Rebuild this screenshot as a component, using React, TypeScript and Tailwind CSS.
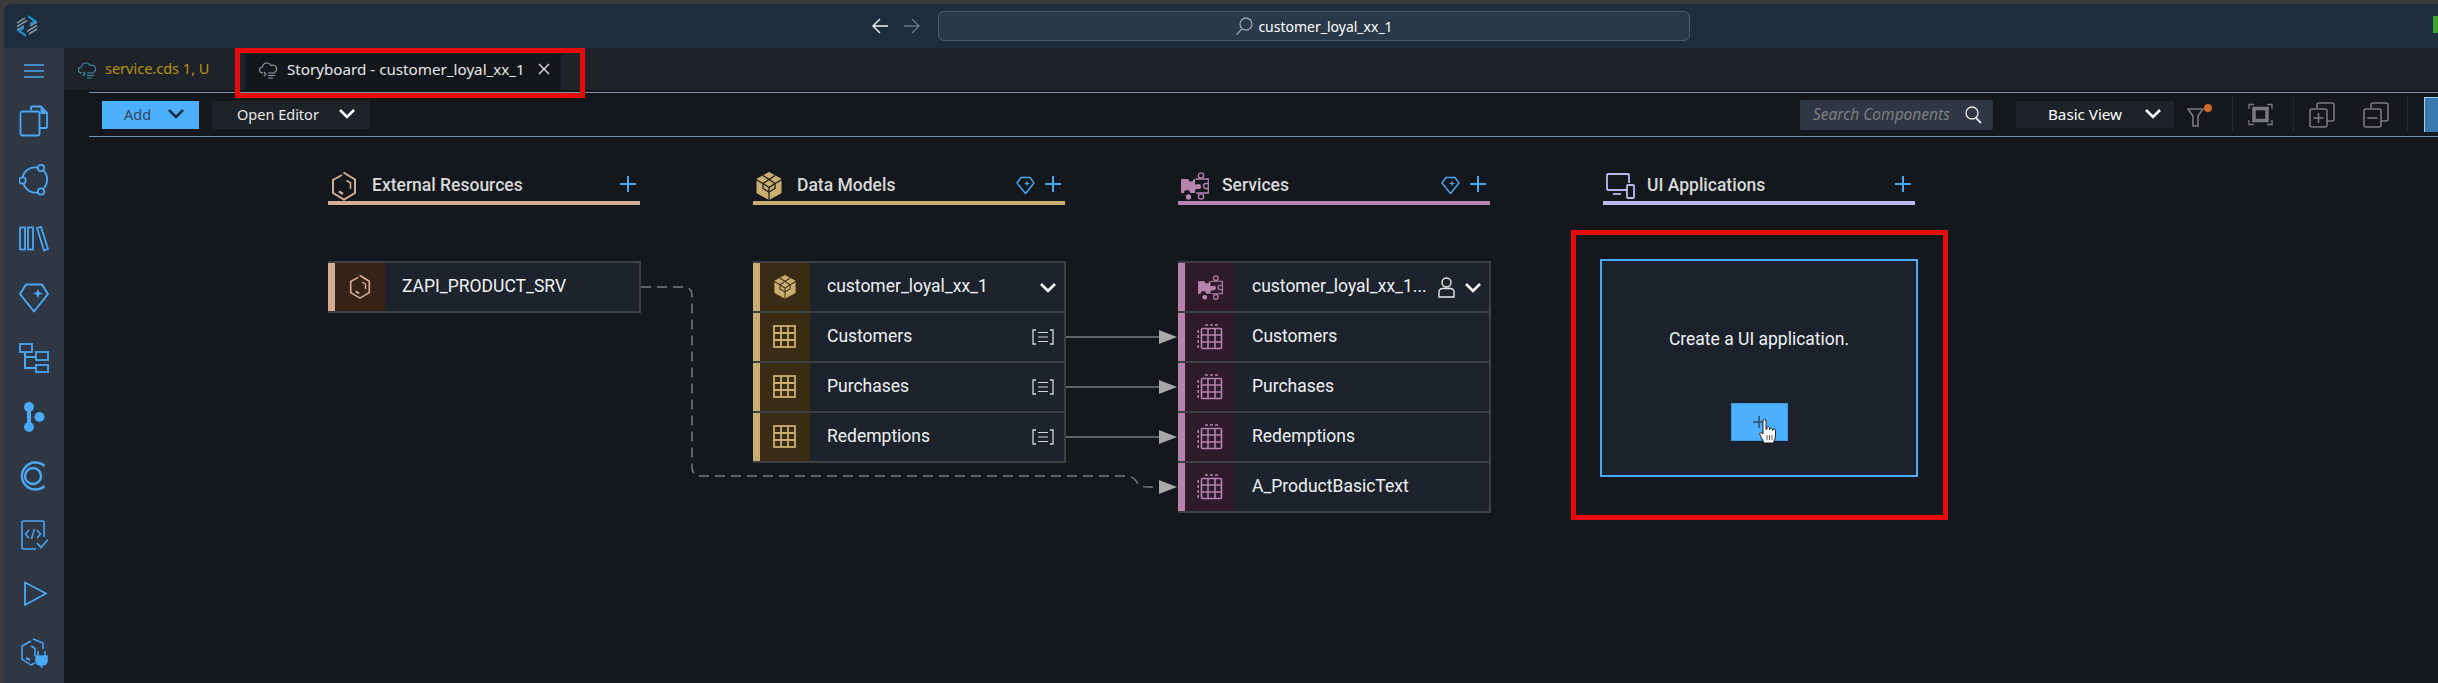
import React from "react";

const BLUE = "#4aa8f5";
const UI = "font-['Segoe_UI','Noto_Sans','Open_Sans',sans-serif]";

function Chevron({ color = "#ffffff", w = 18, h = 11 }: { color?: string; w?: number; h?: number }) {
  return (
    <svg width={w} height={h} viewBox="0 0 18 11" fill="none">
      <path d="M2 2 L9 9 L16 2" stroke={color} strokeWidth="2.6" />
    </svg>
  );
}

function Plus({ color = BLUE }: { color?: string }) {
  return (
    <svg width="16" height="16" viewBox="0 0 16 16">
      <path d="M8 0V16M0 8H16" stroke={color} strokeWidth="2" />
    </svg>
  );
}

function Gem({ size = 19 }: { size?: number }) {
  return (
    <svg width={size} height={size} viewBox="0 0 19 19" fill="none">
      <path d="M5 1.500H14L18 7L9.500 17.500L1 7Z" stroke={BLUE} strokeWidth="1.400" strokeLinejoin="round" />
      <path d="M11 4.500L11.800 6.700L14 7.500L11.800 8.300L11 10.500L10.200 8.300L8 7.500L10.200 6.700Z" fill={BLUE} />
    </svg>
  );
}

function Hex({ size = 26, color = "#d1ad98" }: { size?: number; color?: string }) {
  return (
    <svg width={size} height={(size * 30) / 26} viewBox="0 0 26 30" fill="none" stroke={color} strokeWidth="2">
      <path d="M11 4L2 9V22L13 28.500L24 22V8.500L12.500 1.500" />
      <path d="M15.500 9.500L19.500 12V18" strokeWidth="1.600" />
      <path d="M8 20.500L12 23" strokeWidth="2.200" />
    </svg>
  );
}

function Cube({ size = 26, color = "#c9ae6f", line = "#14181c" }: { size?: number; color?: string; line?: string }) {
  return (
    <svg width={size} height={(size * 28) / 26} viewBox="0 0 26 28">
      <path d="M13 0.500L25 7V21L13 27.500L1 21V7Z" fill={color} stroke={color} strokeLinejoin="round" />
      <g fill="none" stroke={line} strokeWidth="1.200">
        <path d="M7 3.500L13 7.500L19 3.500" />
        <path d="M0 7.500L7 11.500V16.500L13 20L19 16.500V11.500L26 7.500" />
        <path d="M7 11.500L13 7.500L19 11.500L13 15.500ZM13 15.500V20M13 20V28" />
      </g>
    </svg>
  );
}

function Puzzle({ size = 28, color = "#b583ac" }: { size?: number; color?: string }) {
  return (
    <svg width={size} height={size} viewBox="0 0 28 28" fill="none">
      <path d="M0 7H7.500A2.500 2.500 0 0 0 12.500 7H14V12.200A2.600 2.600 0 1 1 14 17.800V21H9A3 3 0 0 0 3 21H0Z" fill={color} />
      <circle cx="7.500" cy="25" r="2.700" fill={color} />
      <circle cx="20" cy="3.500" r="2.600" stroke={color} strokeWidth="1.300" />
      <circle cx="20" cy="24.500" r="2.600" stroke={color} strokeWidth="1.300" />
      <path d="M14.500 7H27.300V21H15M27 11.500H25A2.500 2.500 0 0 0 25 16.500H27" stroke={color} strokeWidth="1.300" />
      <circle cx="17.500" cy="14.500" r="2.600" fill={color} />
    </svg>
  );
}

function Device() {
  const c = "#bdb8f0";
  return (
    <svg width="29" height="26" viewBox="0 0 29 26" fill="none">
      <path d="M21 17H2A1.200 1.200 0 0 1 1 16V2A1.200 1.200 0 0 1 2 1H22A1.200 1.200 0 0 1 23 2V10" stroke={c} strokeWidth="1.800" />
      <path d="M7 21H15" stroke={c} strokeWidth="1.800" />
      <rect x="21" y="12" width="7" height="13" rx="1" stroke={c} strokeWidth="1.800" />
    </svg>
  );
}

function Table({ color, dashed }: { color: string; dashed?: boolean }) {
  return (
    <svg width="26" height="26" viewBox="0 0 26 26" fill="none">
      {dashed ? (
        <>
          <path d="M8 1H11M13 1H16M18 1H21" stroke={color} strokeWidth="1.500" />
          <path d="M1.200 6V9M1.200 11V14M1.200 16V19M1.200 21V24" stroke={color} strokeWidth="1.500" />
          <rect x="4.500" y="4.500" width="20" height="20" stroke={color} strokeWidth="1.600" rx="1" />
          <path d="M11 4.500V24.500M18 4.500V24.500M4.500 11H24.500M4.500 18H24.500" stroke={color} strokeWidth="1.600" />
        </>
      ) : (
        <>
          <rect x="2" y="2" width="21" height="21" stroke={color} strokeWidth="1.800" />
          <path d="M9 2V23M16 2V23M2 9H23M2 16H23" stroke={color} strokeWidth="1.800" />
        </>
      )}
    </svg>
  );
}

function ListIcon() {
  return (
    <svg width="22" height="16" viewBox="0 0 22 16" fill="none" stroke="#d6d6d6">
      <path d="M4 1H1V15H4M18 1H21V15H18" strokeWidth="1.300" />
      <path d="M6 3.500H16M6 8H16M6 12.500H16" strokeWidth="1.200" />
    </svg>
  );
}

function Person() {
  return (
    <svg width="17" height="21" viewBox="0 0 17 21" fill="none" stroke="#e8e8e8" strokeWidth="1.400">
      <circle cx="8.500" cy="5.500" r="4.500" />
      <path d="M1 20V15A3.500 3.500 0 0 1 4.500 11.500H12.500A3.500 3.500 0 0 1 16 15V20Z" />
    </svg>
  );
}

function CloudFile({ color = "#8fa0a8" }: { color?: string }) {
  return (
    <svg width="19" height="19" viewBox="0 0 19 19" fill="none" stroke={color} strokeWidth="1.100">
      <path d="M4 13H3.500A3 3 0 0 1 3.500 7A4.500 4.500 0 0 1 12 5.500A3.700 3.700 0 0 1 15.500 12.500" />
      <path d="M5 12L7 14L5 16M9 13H16M9 15.500H16M9 18H14" />
    </svg>
  );
}

const sideIcons: React.ReactNode[] = [
  <svg key="files" width="30" height="32" viewBox="0 0 30 32" fill="none" stroke={BLUE} strokeWidth="1.800">
    <path d="M12 5V2.500A1 1 0 0 1 13 1.500H22L28 7.500V22A1 1 0 0 1 27 23H21" />
    <rect x="1.500" y="6.500" width="19" height="24" rx="2" />
    <path d="M21.500 1.500L28 8V9H21.500Z" fill={BLUE} stroke="none" />
  </svg>,
  <svg key="nodes" width="30" height="32" viewBox="0 0 30 32" fill="none" stroke={BLUE} strokeWidth="1.800">
    <path d="M25 7A13 13 0 0 1 25 24" />
    <path d="M19 28.500A13 13 0 0 1 4.500 20" />
    <path d="M3.500 13A13 13 0 0 1 18 3.500" />
    <circle cx="22" cy="4" r="3.200" />
    <circle cx="3.500" cy="16.500" r="3.200" />
    <circle cx="22" cy="27.500" r="3.200" />
  </svg>,
  <svg key="books" width="30" height="26" viewBox="0 0 30 26" fill="none" stroke={BLUE} strokeWidth="1.800">
    <rect x="1" y="1.500" width="5" height="22" />
    <rect x="9" y="1.500" width="5" height="22" />
    <path d="M18 2L22 1L29 23L25 24.500Z" />
  </svg>,
  <svg key="gem" width="30" height="30" viewBox="0 0 30 30" fill="none">
    <path d="M7 1.500H23L29 11L15 28.500L1 11Z" stroke={BLUE} strokeWidth="2" strokeLinejoin="round" />
    <path d="M19 5.500L20.300 9.200L24 10.500L20.300 11.800L19 15.500L17.700 11.800L14 10.500L17.700 9.200Z" fill={BLUE} />
  </svg>,
  <svg key="tree" width="30" height="30" viewBox="0 0 30 30" fill="none" stroke={BLUE} strokeWidth="1.800">
    <rect x="1" y="1" width="12" height="8" />
    <rect x="17" y="9" width="12" height="8" />
    <rect x="17" y="22" width="12" height="7" />
    <path d="M6 9V25H17M6 14H17" strokeWidth="2" />
  </svg>,
  <svg key="dots" width="30" height="30" viewBox="0 0 30 30" fill={BLUE}>
    <circle cx="10" cy="5" r="5" />
    <circle cx="10" cy="25" r="5" />
    <circle cx="20.500" cy="15" r="5" />
    <path d="M8 8H12V22H8Z" />
  </svg>,
  <svg key="rings" width="30" height="30" viewBox="0 0 30 30" fill="none" stroke={BLUE} strokeWidth="2.400">
    <circle cx="14" cy="15" r="8" />
    <path d="M25.500 5A13.500 13.500 0 1 0 25.500 25" />
  </svg>,
  <svg key="code" width="30" height="30" viewBox="0 0 30 30" fill="none" stroke={BLUE} strokeWidth="1.600">
    <path d="M25 17V2.500A1.500 1.500 0 0 0 23.500 1H4.500A1.500 1.500 0 0 0 3 2.500V27.500A1.500 1.500 0 0 0 4.500 29H17" />
    <path d="M18 23L22 27.500L29 19.500" />
    <path d="M10 10L6.500 14L10 18M18 10L21.500 14L18 18M15.500 9L12.500 19" strokeWidth="1.500" />
  </svg>,
  <svg key="play" width="30" height="30" viewBox="0 0 30 30" fill="none" stroke={BLUE} strokeWidth="1.800">
    <path d="M6 3.500L27 14.500L6 26Z" strokeLinejoin="round" />
  </svg>,
  <svg key="plug" width="30" height="30" viewBox="0 0 30 30" fill="none" stroke={BLUE} strokeWidth="1.500">
    <path d="M12 3L3 8V21L12 27L16 25M14 1L24 5V11" />
    <path d="M12 8L16 10.500V18" />
    <path d="M7 20L11 22" strokeWidth="2" />
    <path d="M19 13V18M26 13V18M17 18H28V23A4 4 0 0 1 24 27H21A4 4 0 0 1 17 23ZM22.500 27V30" fill={BLUE} strokeWidth="1.500" />
  </svg>,
];

function Sidebar() {
  return (
    <aside className="flex w-[60px] shrink-0 flex-col items-center bg-[#2f3744]">
      <div className="flex h-[44px] w-full items-center justify-center pt-[2px]">
        <svg width="20" height="14" viewBox="0 0 20 14">
          <path d="M0 1H20M0 7H20M0 13H20" stroke={BLUE} strokeWidth="1.400" />
        </svg>
      </div>
      {sideIcons.map((icon, i) => (
        <div key={i} className="flex h-[60px] w-full items-center justify-center">
          {icon}
        </div>
      ))}
    </aside>
  );
}

function TitleBar() {
  return (
    <header className="flex h-[44px] shrink-0 items-center rounded-tl-lg bg-[#1e2d3d]">
      <svg className="ml-[12px]" width="22" height="24" viewBox="0 0 22 24" fill="none">
        <path d="M1 9L9 4M1 12.500L11 6.500M1 16L8 12M21 8L14 12M21 11.500L11 17.500M21 15L13 20" stroke="#7f909e" strokeWidth="1.500" />
        <path d="M12 1L21 7L14 11.500V9L17 7L12 3.500Z" fill="#1b8fd0" />
        <path d="M10 23L1 17L8 12.500V15L5 17L10 20.500Z" fill="#1b8fd0" />
      </svg>
      <svg className="ml-[834px]" width="16" height="16" viewBox="0 0 16 16" fill="none" stroke="#f2f2f2" strokeWidth="1.400">
        <path d="M16 8H1M8 1L1 8L8 15" />
      </svg>
      <svg className="ml-[16px]" width="16" height="16" viewBox="0 0 16 16" fill="none" stroke="#6d7680" strokeWidth="1.400">
        <path d="M0 8H15M8 1L15 8L8 15" />
      </svg>
      <div className={`ml-[18px] flex h-[30px] w-[752px] items-center justify-center gap-[5px] rounded-md border border-[#4d5b6b] bg-[#2a3949] text-[14px] text-white ${UI}`}>
        <svg width="18" height="18" viewBox="0 0 18 18" fill="none" stroke="#9aa3ab" strokeWidth="1.300">
          <circle cx="11" cy="7" r="6" />
          <path d="M7 12L1.500 17.500" />
        </svg>
        customer_loyal_xx_1
      </div>
      <div className="ml-auto mb-[4px] mr-0 h-[17px] w-[5px] bg-[#3fa32f]" />
    </header>
  );
}

function Tabs() {
  return (
    <div className={`flex h-[42px] shrink-0 bg-[#1e2229] text-[14.500px] ${UI}`}>
      <div className="flex w-[181px] items-center gap-[8px] pl-[14px] text-[#b8960c]">
        <CloudFile color="#3e8fb0" />
        <span>service.cds 1, U</span>
      </div>
      <div className="flex w-[316px] items-center gap-[9px] bg-[#13171b] pl-[14px] text-[15.200px] text-[#e8e8e8]">
        <CloudFile />
        <span>Storyboard - customer_loyal_xx_1</span>
        <svg className="ml-[4px]" width="12" height="12" viewBox="0 0 12 12" stroke="#e8e8e8" strokeWidth="1.300">
          <path d="M1 1L11 11M11 1L1 11" />
        </svg>
      </div>
    </div>
  );
}

function Toolbar() {
  const ic = "#7a7a7a";
  return (
    <div className={`ml-[25px] mt-[2px] flex h-[45px] shrink-0 items-center border-y border-[#7d93ad] pr-0 text-[14.500px] ${UI}`}>
      <button className="ml-[13px] flex h-[28px] w-[97px] items-center bg-[#4db0ff] pl-[22px] text-[#33475b]">
        Add
        <span className="-mt-[3px] ml-[16px] flex"><Chevron color="#1b2a3a" /></span>
      </button>
      <button className="ml-[13px] flex h-[28px] w-[158px] items-center bg-[#1e2229] pl-[25px] text-[#e8e8e8]">
        Open Editor
        <span className="-mt-[3px] ml-[19px] flex"><Chevron /></span>
      </button>
      <div className="ml-[1430px] flex h-[30px] w-[193px] items-center justify-between rounded-[2px] bg-[#2f3744] pl-[13px] pr-[11px] text-[15.500px] italic text-[#7e7e7e]">
        Search Components
        <svg width="17" height="18" viewBox="0 0 17 18" fill="none" stroke="#e0e0e0" strokeWidth="1.400">
          <circle cx="7" cy="7" r="6" />
          <path d="M11 12L16 17" strokeWidth="1.800" />
        </svg>
      </div>
      <div className="ml-[23px] flex h-[27px] w-[158px] items-center bg-[#1e2229] pl-[32px] text-[15.200px] text-white">
        Basic View
        <span className="-mt-[2px] ml-[22px] flex"><Chevron /></span>
      </div>
      <svg className="ml-[13px]" width="26" height="24" viewBox="0 0 26 24" fill="none">
        <path d="M1 6H16L11 13V23H6V13Z" stroke={ic} strokeWidth="1.600" />
        <circle cx="21" cy="5" r="4" fill="#d0692b" />
      </svg>
      <div className="ml-[19px] h-[36px] w-px bg-[#252a30]" />
      <svg className="ml-[15px]" width="25" height="23" viewBox="0 0 25 23" fill="none" stroke={ic}>
        <path d="M1 6V1.500H6M19 1.500H24V6M24 17V21.500H19M6 21.500H1V17" strokeWidth="1.300" />
        <rect x="6" y="5.500" width="13" height="12" strokeWidth="3.500" />
      </svg>
      <div className="ml-[20px] h-[36px] w-px bg-[#252a30]" />
      <svg className="ml-[15px]" width="26" height="26" viewBox="0 0 26 26" fill="none" stroke={ic} strokeWidth="1.600">
        <path d="M8 6V3A2 2 0 0 1 10 1H23A2 2 0 0 1 25 3V17A2 2 0 0 1 23 19H18" />
        <rect x="1" y="7" width="17" height="18" rx="2" />
        <path d="M9.500 11V21M4.500 16H14.500" />
      </svg>
      <svg className="ml-[28px]" width="26" height="26" viewBox="0 0 26 26" fill="none" stroke={ic} strokeWidth="1.600">
        <path d="M8 6V3A2 2 0 0 1 10 1H23A2 2 0 0 1 25 3V17A2 2 0 0 1 23 19H18" />
        <rect x="1" y="7" width="17" height="18" rx="2" />
        <path d="M4.500 16H14.500" />
      </svg>
      <div className="ml-[18px] h-[36px] w-px bg-[#252a30]" />
      <div className="ml-[16px] h-[35px] flex-1 border-l border-t border-[#9fd0f5] bg-[#3a78b0]" />
    </div>
  );
}

type Row = { icon: React.ReactNode; label: string; right?: React.ReactNode; tight?: boolean };

function NodeCard({ bar, cell, rows }: { bar: string; cell: string; rows: Row[] }) {
  return (
    <div className="mt-[56px] w-[313px] border-y-2 border-r-2 border-[#3c4044] bg-[#1c232c]">
      {rows.map((r, i) => (
        <div key={r.label} className={`flex items-stretch border-[#3c4044] ${i < rows.length - 1 ? "h-[50px] border-b-2" : "h-[48px]"}`}>
          <div className={`w-[7px] shrink-0 ${bar}`} />
          <div className={`flex w-[50px] shrink-0 items-center justify-center ${cell}`}>{r.icon}</div>
          <div className="min-w-0 flex-1 self-center pb-[3px] pl-[17px] text-[17.500px] leading-[24px] text-[#eef1f4]">
            {r.label}
          </div>
          {r.right && <div className={`flex items-center ${r.tight ? "pr-[7px]" : "pr-[10px]"}`}>{r.right}</div>}
        </div>
      ))}
    </div>
  );
}

function ColumnHead({ icon, title, color, gem }: { icon: React.ReactNode; title: string; color: string; gem?: boolean }) {
  return (
    <div className={`flex h-[35px] items-center border-b-4 ${color}`}>
      <div className="flex w-[44px] shrink-0 pl-[3px]">{icon}</div>
      <span className="flex-1 text-[17.500px] font-medium text-[#d9d9d9]">{title}</span>
      {gem && <span className="mr-[10px] flex"><Gem /></span>}
      <span className="mr-[4px] flex pb-[4px]"><Plus /></span>
    </div>
  );
}

function Canvas() {
  const gold = "#c9ae6f";
  const pink = "#b583ac";
  return (
    <div className="flex flex-1 gap-[113px] pl-[264px] pt-[33px] font-['Roboto',sans-serif]">
      <div className="w-[312px]">
        <ColumnHead icon={<Hex />} title="External Resources" color="border-[#d1ad98]" />
        <NodeCard bar="bg-[#d1ad98]" cell="bg-[#362216]" rows={[{ icon: <Hex size={22} />, label: "ZAPI_PRODUCT_SRV" }]} />
      </div>
      <div className="w-[312px]">
        <ColumnHead icon={<Cube />} title="Data Models" color="border-[#c9ae6f]" gem />
        <NodeCard
          bar="bg-[#c9ae6f]"
          cell="bg-[#3a2c14]"
          rows={[
            { icon: <Cube size={22} line="#3a2c14" />, label: "customer_loyal_xx_1", right: <Chevron />, tight: true },
            { icon: <Table color={gold} />, label: "Customers", right: <ListIcon /> },
            { icon: <Table color={gold} />, label: "Purchases", right: <ListIcon /> },
            { icon: <Table color={gold} />, label: "Redemptions", right: <ListIcon /> },
          ]}
        />
      </div>
      <div className="w-[312px]">
        <ColumnHead icon={<Puzzle />} title="Services" color="border-[#b583ac]" gem />
        <NodeCard
          bar="bg-[#b583ac]"
          cell="bg-[#2f1a2b]"
          rows={[
            {
              icon: <Puzzle size={25} />,
              label: "customer_loyal_xx_1...",
              tight: true,
              right: (
                <span className="flex items-center gap-[9px]">
                  <Person />
                  <Chevron />
                </span>
              ),
            },
            { icon: <Table color={pink} dashed />, label: "Customers" },
            { icon: <Table color={pink} dashed />, label: "Purchases" },
            { icon: <Table color={pink} dashed />, label: "Redemptions" },
            { icon: <Table color={pink} dashed />, label: "A_ProductBasicText" },
          ]}
        />
      </div>
      <div className="w-[312px]">
        <ColumnHead icon={<Device />} title="UI Applications" color="border-[#bdb8f0]" />
        <div className="ml-[-3px] mt-[54px] flex h-[218px] w-[318px] flex-col items-center border-2 border-[#4aa8f5] bg-[#1c222b] pt-[66px] text-[17.500px] text-[#eef1f4]">
          <span className="leading-[24px]">Create a UI application.</span>
          <div className="relative mt-[52px] flex h-[38px] w-[57px] items-center justify-center border border-[#3f9ae0] bg-[#4db0ff]">
            <svg width="12" height="12" viewBox="0 0 12 12"><path d="M6 0V12M0 6H12" stroke="#2c4a66" strokeWidth="1.500" /></svg>
            <svg className="absolute left-[27px] top-[15px]" width="18" height="25" viewBox="0 0 18 25">
              <path
                d="M4 2A1.500 1.500 0 0 1 7 2V10.500L8 10V8.500A1.300 1.300 0 0 1 10.500 8.500V10.500L11 10.500A1.300 1.300 0 0 1 13.500 10.500V11.500A1.300 1.300 0 0 1 16.500 11.500V18L14.500 24H5L0.800 15.500C0.300 14 2 12.500 4 15Z"
                fill="#ffffff"
                stroke="#111111"
                strokeWidth="0.900"
              />
              <path d="M8 16V21M10.500 16V21M13 16V21" stroke="#333" strokeWidth="0.800" />
            </svg>
          </div>
        </div>
      </div>
    </div>
  );
}

function Connectors() {
  const c = "#777b80";
  const Arrow = ({ y }: { y: number }) => <path d={`M1159 ${y - 7}L1177 ${y}L1159 ${y + 7}Z`} fill="#a8a8a8" />;
  return (
    <svg className="pointer-events-none absolute left-0 top-0" width="2438" height="683" fill="none">
      <path d="M641 287H683Q692 287 692 296V467Q692 476 701 476H1125C1140 476 1133 487 1147 487H1160" stroke={c} strokeWidth="1.500" strokeDasharray="10 6" />
      <path d="M1066 337H1160M1066 387H1160M1066 437H1160" stroke={c} strokeWidth="1.500" />
      <Arrow y={337} />
      <Arrow y={387} />
      <Arrow y={437} />
      <Arrow y={487} />
    </svg>
  );
}

export default function App() {
  return (
    <div className="relative flex h-[683px] w-[2438px] flex-col overflow-hidden bg-[#3b3b3b] pl-[4px] pt-[4px]">
      <TitleBar />
      <div className="flex min-h-0 flex-1">
        <Sidebar />
        <main className="flex min-w-0 flex-1 flex-col bg-[#14181c]">
          <Tabs />
          <Toolbar />
          <Canvas />
        </main>
      </div>
      <Connectors />
      <div className="absolute left-[235px] top-[48px] h-[50px] w-[350px] border-[5px] border-[#e60a0a]" />
      <div className="absolute left-[1571px] top-[230px] h-[290px] w-[377px] border-[5px] border-[#e60a0a]" />
    </div>
  );
}
